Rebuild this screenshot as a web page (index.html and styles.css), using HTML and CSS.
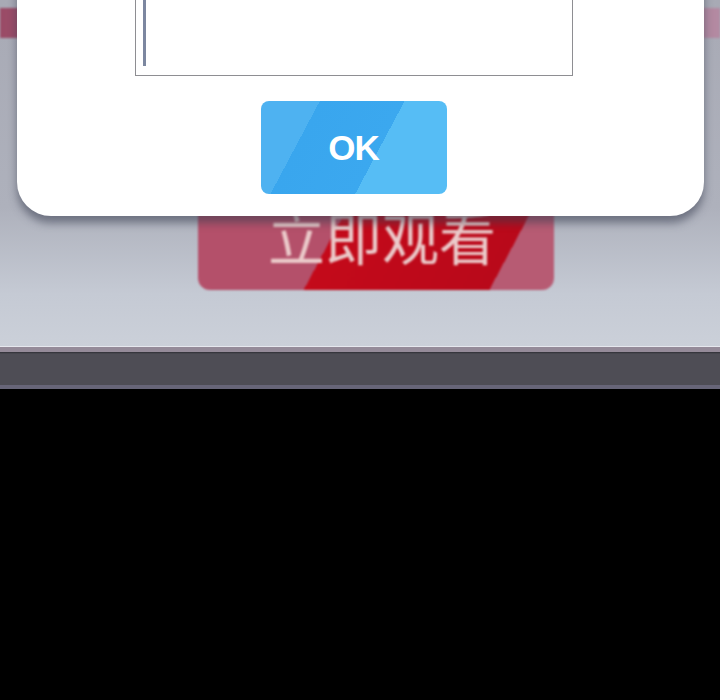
FILE: index.html
```html
<!DOCTYPE html>
<html lang="zh-CN">
<head>
  <meta charset="UTF-8">
  <meta name="viewport" content="width=device-width, initial-scale=1.0">
  <link rel="stylesheet" href="styles.css">
  <title>立即观看</title>
</head>

<body>

<div class="screen">
  <!-- page behind the prompt -->
  <div class="banner"></div>
  <div class="watch-btn">立即观看</div>

  <!-- prompt dialog -->
  <div class="prompt">
    <div class="prompt-input">
      <div class="caret"></div>
    </div>
    <button class="ok-btn">OK</button>
  </div>
</div>

<div class="toolbar"></div>
<div class="blank"></div>

</body>
</html>
```

FILE: styles.css
```css
body {
  margin: 0;
  padding: 0;
  background: #000;
  font-family: "Liberation Sans", Arial, sans-serif;
}

.screen {
  position: relative;
  height: 346px;
  overflow: hidden;
  background: linear-gradient(#a8aab5, #aeb1bc 60%, #c5cad4 85%, #cbd0d9);
  border-bottom: 1px solid #e6e8ee;
}

.banner {
  margin-top: 8px;
  height: 30px;
  background: linear-gradient(to right, #9a4b67, #a9768f 50%, #b38aa2);
  filter: blur(1px);
}

.watch-btn {
  width: 356px;
  height: 90px;
  margin: 162px 0 0 198px;
  padding: 0 0 20px 12px;
  box-sizing: border-box;
  display: flex;
  align-items: center;
  justify-content: center;
  border-radius: 12px;
  background: linear-gradient(118deg, #b4506a 38%, #c40a1a 38%, #b9091a 84%, #b75b73 84%);
  color: #ebcaca;
  font-family: "Noto Sans CJK SC", sans-serif;
  font-size: 57px;
  filter: blur(0.8px);
}

.prompt {
  position: absolute;
  top: -120px;
  left: 17px;
  width: 687px;
  height: 336px;
  padding: 16px 14px 22px 0;
  box-sizing: border-box;
  display: flex;
  flex-direction: column;
  align-items: center;
  gap: 25px;
  background: #fff;
  border-radius: 34px;
  box-shadow: 0 7px 9px rgba(55, 60, 78, 0.55);
}

.prompt-input {
  width: 438px;
  height: 180px;
  box-sizing: border-box;
  border: 1px solid #8e8e92;
  display: flex;
  align-items: flex-end;
  padding: 0 0 9px 7px;
}

.caret {
  width: 3px;
  height: 70px;
  background: #7c87a0;
}

.ok-btn {
  width: 186px;
  height: 93px;
  border: none;
  border-radius: 8px;
  background: linear-gradient(118deg, #4eb2f1 25%, #39a6ee 25%, #3ba8ef 61%, #56bdf5 61%);
  color: #fff;
  font-family: "Liberation Sans", Arial, sans-serif;
  font-weight: bold;
  font-size: 35px;
  letter-spacing: -1px;
  padding: 0;
  cursor: pointer;
}

.toolbar {
  height: 42px;
  box-sizing: border-box;
  border-top: 5px solid #958b99;
  border-bottom: 4px solid #676578;
  background: linear-gradient(#2f2f35 0, #4e4d55 2px, #4e4d55);
}

.blank {
  height: 311px;
  background: #000;
}
```
